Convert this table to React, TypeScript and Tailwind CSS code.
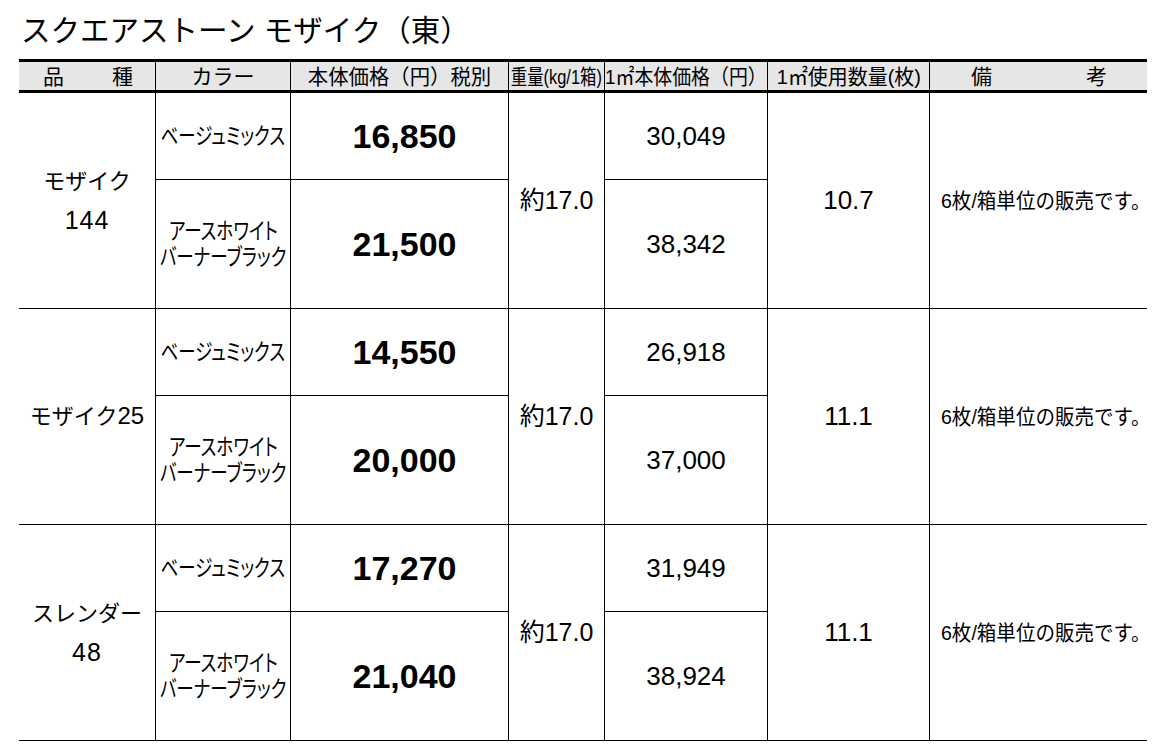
const cols = "grid grid-cols-[136px_135px_218px_96px_163px_162px_218px]"

interface Group {
  name: string
  code?: string
  items: { colors: string[]; price: string; perM2: string }[]
  qty: string
  inline?: boolean
}

const groups: Group[] = [
  {
    name: "モザイク",
    code: "144",
    items: [
      { colors: ["ベージュミックス"], price: "16,850", perM2: "30,049" },
      { colors: ["アースホワイト", "バーナーブラック"], price: "21,500", perM2: "38,342" },
    ],
    qty: "10.7",
  },
  {
    name: "モザイク",
    code: "25",
    inline: true,
    items: [
      { colors: ["ベージュミックス"], price: "14,550", perM2: "26,918" },
      { colors: ["アースホワイト", "バーナーブラック"], price: "20,000", perM2: "37,000" },
    ],
    qty: "11.1",
  },
  {
    name: "スレンダー",
    code: "48",
    items: [
      { colors: ["ベージュミックス"], price: "17,270", perM2: "31,949" },
      { colors: ["アースホワイト", "バーナーブラック"], price: "21,040", perM2: "38,924" },
    ],
    qty: "11.1",
  },
]

function ColorCell({ colors }: { colors: string[] }) {
  return (
    <div className="flex flex-col items-center leading-[26px] text-[23px] [font-feature-settings:'palt']">
      {colors.map(c => (
        <span key={c} className="inline-block whitespace-nowrap scale-x-[0.76]">
          {c}
        </span>
      ))}
    </div>
  )
}

function NameCell({ group }: { group: Group }) {
  if (group.inline) {
    return (
      <span className="whitespace-nowrap">
        {group.name}
        <span className="text-[24px]">{group.code}</span>
      </span>
    )
  }
  return (
    <>
      <span>{group.name}</span>
      <span className="text-[25px] tracking-[1px]">{group.code}</span>
    </>
  )
}

function ProductGroup({ group }: { group: Group }) {
  const [top, bottom] = group.items
  return (
    <div className={`${cols} grid-rows-[86px_129px] border-b border-black`}>
      <div className="col-start-1 row-start-1 row-span-2 flex flex-col items-center justify-center text-[22px] leading-[38px]">
        <NameCell group={group} />
      </div>
      <div className="col-start-2 row-start-1 border-l border-black flex items-center justify-center">
        <ColorCell colors={top.colors} />
      </div>
      <div className="col-start-3 row-start-1 border-l border-black flex items-center justify-center pl-[10px] text-[34px] font-bold">
        {top.price}
      </div>
      <div className="col-start-4 row-start-1 row-span-2 border-l border-black flex items-center justify-center text-[25px]">
        約17.0
      </div>
      <div className="col-start-5 row-start-1 border-l border-black flex items-center justify-center text-[26px]">
        {top.perM2}
      </div>
      <div className="col-start-6 row-start-1 row-span-2 border-l border-black flex items-center justify-center text-[26px]">
        {group.qty}
      </div>
      <div className="col-start-7 row-start-1 row-span-2 border-l border-black flex items-center pl-[11px] text-[21px]">
        <span className="inline-block whitespace-nowrap origin-left scale-x-[0.93]">6枚/箱単位の販売です。</span>
      </div>
      <div className="col-start-2 row-start-2 border-l border-t border-black flex items-center justify-center">
        <ColorCell colors={bottom.colors} />
      </div>
      <div className="col-start-3 row-start-2 border-l border-t border-black flex items-center justify-center pl-[10px] text-[34px] font-bold">
        {bottom.price}
      </div>
      <div className="col-start-5 row-start-2 border-l border-t border-black flex items-center justify-center text-[26px]">
        {bottom.perM2}
      </div>
    </div>
  )
}

export default function App() {
  return (
    <div className="min-h-screen bg-white text-black px-[19px] pt-[11px] font-['Liberation_Sans','Noto_Sans_CJK_JP',sans-serif]">
      <h1 className="text-[29.5px] leading-[40px] pl-[2px] mb-[8px] whitespace-nowrap">
        スクエアストーン モザイク（東）
      </h1>
      <div className="w-[1128px]">
        <div className={`${cols} h-[34px] border-y-[3px] border-black bg-[#e6e6e6] text-[21px] leading-none`}>
          <div className="flex items-center justify-between pl-[24px] pr-[22px]">
            <span>品</span>
            <span>種</span>
          </div>
          <div className="border-l border-black flex items-center justify-center">カラー</div>
          <div className="border-l border-black flex items-center justify-center">
            <span className="inline-block whitespace-nowrap scale-x-[0.97]">本体価格（円）税別</span>
          </div>
          <div className="border-l border-black flex items-center justify-center">
            <span className="inline-block whitespace-nowrap scale-x-[0.78]">重量(kg/1箱)</span>
          </div>
          <div className="border-l border-black flex items-center justify-center">
            <span className="inline-block whitespace-nowrap scale-x-[0.9]">1㎡本体価格（円）</span>
          </div>
          <div className="border-l border-black flex items-center justify-center">
            <span className="inline-block whitespace-nowrap scale-x-[0.95]">1㎡使用数量(枚)</span>
          </div>
          <div className="border-l border-black flex items-center justify-between pl-[41px] pr-[40px]">
            <span>備</span>
            <span>考</span>
          </div>
        </div>
        {groups.map(g => (
          <ProductGroup group={g} key={g.name + g.code} />
        ))}
      </div>
    </div>
  )
}
